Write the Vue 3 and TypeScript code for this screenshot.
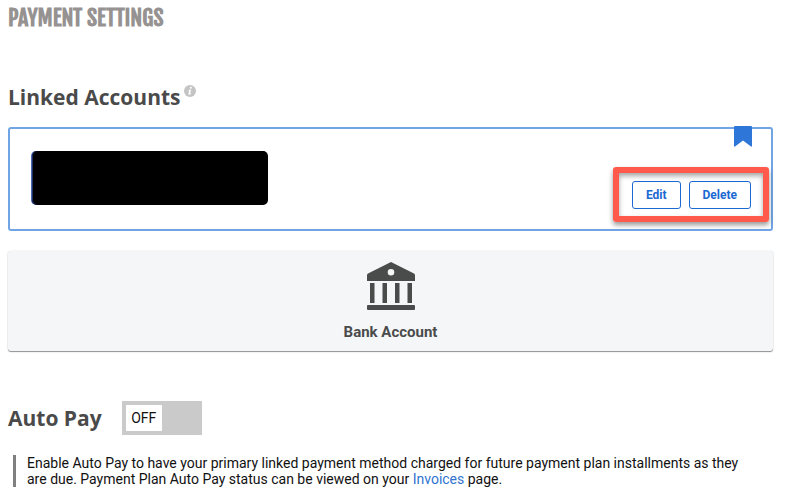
<script setup lang="ts">
import { ref } from 'vue'

const autoPay = ref<boolean>(false)
</script>

<template>
  <main class="page">
    <h1 class="page-title">PAYMENT SETTINGS</h1>

    <section>
      <h2 class="section-title">
        Linked Accounts
        <svg class="info" viewBox="0 0 12 12" aria-hidden="true">
          <circle cx="6" cy="6" r="6" fill="#c4c4c4" />
          <circle cx="6.9" cy="2.8" r="1" fill="#fff" />
          <path d="M4.7 4.7h2.4L6.2 8.5h.9l-.2 1H4.3l.8-3.8h-.7z" fill="#fff" />
        </svg>
      </h2>

      <article class="account">
        <svg class="bookmark" viewBox="0 0 18 21" aria-hidden="true">
          <path d="M1 0h16q1 0 1 1v19q0 1-1 .6L9 14.5 1 20.6q-1 .4-1-.6V1q0-1 1-1z" fill="#2f76d9" />
        </svg>
        <div class="redacted"></div>
        <div class="actions">
          <button type="button" class="action">Edit</button>
          <button type="button" class="action">Delete</button>
          <div class="highlight"></div>
        </div>
      </article>

      <button type="button" class="add-method">
        <svg class="bank" viewBox="0 0 48 48" aria-hidden="true">
          <path
            fill="#4a4b4b"
            fill-rule="evenodd"
            d="M24 0 47 11.5q1 .6 1 2V19H0v-5.500q0-1.400 1-2zM24 7a3.300 3.300 0 1 0 0 6.600A3.300 3.300 0 1 0 24 7z"
          />
          <path fill="#4a4b4b" d="M3 21h4.500v20H3zM15.500 21h4.500v20h-4.500zM28 21h4.500v20H28zM40.500 21H45v20h-4.500z" />
          <rect y="43" width="48" height="5" rx="1" fill="#4a4b4b" />
        </svg>
        <span>Bank Account</span>
      </button>
    </section>

    <section class="auto-pay">
      <div class="auto-pay-head">
        <h2 id="auto-pay-title" class="section-title">Auto Pay</h2>
        <label class="toggle" :class="{ on: autoPay }">
          <input v-model="autoPay" type="checkbox" aria-labelledby="auto-pay-title" />
          <span class="knob">{{ autoPay ? 'ON' : 'OFF' }}</span>
        </label>
      </div>
      <p class="note">
        Enable Auto Pay to have your primary linked payment method charged for future payment plan
        installments as they are due. Payment Plan Auto Pay status can be viewed on your
        <a href="#invoices">Invoices</a> page.
      </p>
    </section>
  </main>
</template>

<style>
body {
  margin: 0;
  background: #fff;
}
</style>

<style scoped>
.page {
  box-sizing: border-box;
  padding: 4px 12px 8px 8px;
  font-family: Roboto, "Liberation Sans", sans-serif;
  font-size: 14px;
  color: #111;
}

.page-title {
  margin: 0;
  font-family: "Fjalla One", "Roboto Condensed", Roboto, sans-serif;
  font-size: 22px;
  font-weight: 700;
  line-height: 28px;
  color: #969291;
}

.section-title {
  margin: 0;
  font-family: "Open Sans", sans-serif;
  font-size: 21px;
  font-weight: 700;
  line-height: 32px;
  color: #4a4a4a;
}

.page-title + section {
  margin-top: 49px;
}

.info {
  width: 12px;
  height: 12px;
  margin-left: -2px;
  vertical-align: 8px;
}

.account {
  position: relative;
  display: flex;
  justify-content: space-between;
  box-sizing: border-box;
  height: 104px;
  margin-top: 14px;
  padding: 22px 20px 20px 22px;
  border: 2px solid #71a4e4;
  border-radius: 3px;
}

.bookmark {
  position: absolute;
  top: -3px;
  right: 19px;
  width: 18px;
  height: 21px;
}

.redacted {
  width: 236px;
  height: 54px;
  border-radius: 5px;
  background: #000;
  box-shadow: -1px 0 0 #4a66b5, inset 1px 0 0 #1c2f63;
}

.actions {
  position: relative;
  display: flex;
  align-self: flex-end;
  gap: 8px;
}

.action {
  height: 28px;
  padding: 0 13px;
  border: 1px solid #1b69d2;
  border-radius: 3px;
  background: #fff;
  font-family: Roboto, sans-serif;
  font-size: 12px;
  font-weight: 700;
  color: #1b69d2;
}

.highlight {
  position: absolute;
  inset: -14px -18px -13px -19px;
  border: 6px solid #ff5a4c;
  border-radius: 3px;
  box-shadow: 0 3px 5px rgba(0, 0, 0, 0.4), inset 0 3px 5px rgba(0, 0, 0, 0.35);
  pointer-events: none;
}

.add-method {
  display: flex;
  flex-direction: column;
  align-items: center;
  gap: 12px;
  width: 100%;
  height: 100px;
  margin-top: 20px;
  padding: 11px 0 0;
  border: 0;
  border-radius: 3px;
  background: #f5f6f8;
  box-shadow: 0 1px 1px #8e9092, 0 0 2px rgba(0, 0, 0, 0.12);
  font-family: Roboto, sans-serif;
  font-size: 15px;
  font-weight: 700;
  line-height: 20px;
  color: #4a4b4b;
}

.bank {
  width: 48px;
  height: 48px;
}

.auto-pay {
  margin-top: 50px;
}

.auto-pay-head {
  display: flex;
  align-items: center;
  gap: 20px;
}

.toggle {
  display: flex;
  box-sizing: border-box;
  width: 80px;
  height: 34px;
  padding: 4px;
  background: #cacaca;
  cursor: pointer;
}

.toggle.on {
  justify-content: flex-end;
}

.toggle input {
  position: absolute;
  width: 1px;
  height: 1px;
  margin: 0;
  opacity: 0;
}

.knob {
  width: 36px;
  background: #fff;
  line-height: 26px;
  text-align: center;
}

.note {
  margin: 20px 0 0 5px;
  padding: 0 16px 0 11px;
  border-left: 3px solid #808080;
  line-height: 16px;
}

.note a {
  color: #2f74d0;
  text-decoration: none;
}
</style>
